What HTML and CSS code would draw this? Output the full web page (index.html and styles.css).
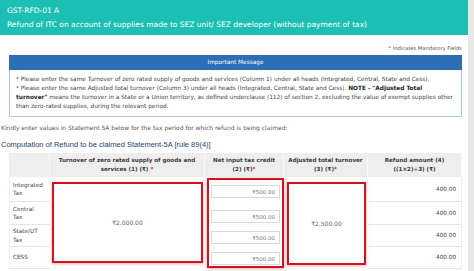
FILE: index.html
```html
<html>
  <head>
    <link rel="stylesheet" href="styles.css">
  </head>
  <body>
    <div class="page">
      <div class="main">
        <div class="header">
          <div class="form-code">GST-RFD-01 A</div>
          <div class="form-title">Refund of ITC on account of supplies made to SEZ unit/ SEZ developer (without payment of tax)</div>
        </div>

        <div class="content">
          <div class="mandatory"><span class="star">*</span> Indicates Mandatory Fields</div>

          <div class="message">
            <div class="message-title">Important Message</div>
            <div class="message-body">
              <div>* Please enter the same Turnover of zero rated supply of goods and services (Column 1) under all heads (Integrated, Central, State and Cess).</div>
              <div>* Please enter the same Adjusted total turnover (Column 3) under all heads (Integrated, Central, State and Cess). <b>NOTE - "Adjusted Total<br>turnover"</b> means the turnover in a State or a Union territory, as defined underclause (112) of section 2, excluding the value of exempt supplies other<br>than zero-rated supplies, during the relevant period.</div>
            </div>
          </div>

          <div class="hint">Kindly enter values in Statement 5A below for the tax period for which refund is being claimed:</div>
          <div class="section-title">Computation of Refund to be claimed Statement-5A [rule 89(4)]</div>

          <div class="refund-table">
            <div class="th"></div>
            <div class="th"><span>Turnover of zero rated supply of goods and<br>services (1) (₹) <span class="star">*</span></span></div>
            <div class="th"><span>Net input tax credit<br>(2) (₹)<span class="star">*</span></span></div>
            <div class="th"><span>Adjusted total turnover<br>(3) (₹)<span class="star">*</span></span></div>
            <div class="th"><span>Refund amount (4)<br>((1×2)÷3) (₹)</span></div>

            <div class="label row-1">Integrated Tax</div>
            <div class="label row-2">Central Tax</div>
            <div class="label row-3">State/UT Tax</div>
            <div class="label row-4">CESS</div>

            <div class="turnover-cell">
              <div class="highlight">₹2,000.00</div>
            </div>

            <div class="credit-cell">
              <div class="highlight credit-list">
                <input class="amount-input" value="₹500.00" readonly>
                <input class="amount-input" value="₹500.00" readonly>
                <input class="amount-input" value="₹500.00" readonly>
                <input class="amount-input" value="₹500.00" readonly>
              </div>
            </div>

            <div class="adjusted-cell">
              <div class="highlight">₹2,500.00</div>
            </div>

            <div class="refund row-1">400.00</div>
            <div class="refund row-2">400.00</div>
            <div class="refund row-3">400.00</div>
            <div class="refund row-4">400.00</div>
          </div>
        </div>
      </div>
      <div class="scroll-strip"></div>
    </div>
  </body>
</html>
```

FILE: styles.css
```css
body {
  margin: 0;
  font-family: "DejaVu Sans", Verdana, sans-serif;
  color: #444444;
  background: #FFFFFF;
}

.page {
  display: flex;
  width: 474px;
  height: 271px;
  overflow: hidden;
}

.main {
  width: 468px;
}

.scroll-strip {
  width: 6px;
  background-color: #E8E8E8;
}

.header {
  height: 35px;
  box-sizing: border-box;
  padding: 4px 7px 0;
  background-color: #1CBFB3;
  color: #FFFFFF;
  font-size: 7.5px;
  line-height: 14px;
}

.content {
  padding: 0 6px 0 1px;
}

.star {
  color: #E0141E;
}

.mandatory,
.message,
.refund-table {
  margin-left: 8px;
}

.mandatory {
  height: 20px;
  box-sizing: border-box;
  padding-top: 9px;
  text-align: right;
  font-size: 5.2px;
  line-height: 8px;
  color: #555555;
}

.message-title {
  height: 15px;
  line-height: 15px;
  text-align: center;
  background-color: #2D6EB5;
  color: #FFFFFF;
  font-size: 5.8px;
}

.message-body {
  border: 1px solid #A8C8EA;
  border-top: none;
  padding: 5px 6px 5px;
  font-size: 5.8px;
  line-height: 9px;
  color: #444444;
  white-space: nowrap;
}

.message-body b {
  color: #222222;
}

.hint {
  margin-top: 5.5px;
  font-size: 6px;
  line-height: 9px;
  color: #555555;
}

.section-title {
  margin-top: 7.5px;
  margin-bottom: 2px;
  font-family: "Liberation Sans", Arial, sans-serif;
  font-size: 7.5px;
  line-height: 12px;
  color: #1D3F6E;
}

.refund-table {
  display: grid;
  grid-template-columns: 41px 155px 79px 84px 94px;
  grid-template-rows: 24px 25px 23px 22px 22px;
  font-size: 5.7px;
}

.th {
  display: flex;
  align-items: center;
  justify-content: center;
  padding: 0 1px;
  text-align: center;
  background-color: #EEEEEE;
  border-right: 1px solid #F8F8F8;
  font-size: 5.6px;
  font-weight: bold;
  color: #3A3A3A;
  line-height: 9px;
  white-space: nowrap;
}

.label,
.refund {
  display: flex;
  align-items: center;
  border-bottom: 1px solid #E4E4E4;
  line-height: 8.5px;
}

.label {
  grid-column: 1;
  padding: 0 8px 0 3px;
  border-left: 1px solid #EEEEEE;
}

.refund {
  grid-column: 5;
  justify-content: flex-end;
  padding-right: 5px;
  border-right: 1px solid #EEEEEE;
}

.row-1 { grid-row: 2; }
.row-2 { grid-row: 3; }
.row-3 { grid-row: 4; }
.row-4 { grid-row: 5; }

.turnover-cell,
.credit-cell,
.adjusted-cell {
  grid-row: 2 / span 4;
  display: flex;
}

.turnover-cell {
  grid-column: 2;
  padding: 5px 2px 6px 2px;
}

.credit-cell {
  grid-column: 3;
  padding: 1px 0 1px 2px;
}

.adjusted-cell {
  grid-column: 4;
  padding: 5px 2px 4px 3px;
}

.highlight {
  flex: 1;
  display: flex;
  align-items: center;
  justify-content: center;
  border: 2px solid #D0141C;
  box-shadow: 0 1px 3px rgba(212, 21, 29, 0.35);
  color: #666666;
  font-size: 6px;
}

.credit-list {
  flex-direction: column;
  justify-content: flex-start;
  padding: 5px 2px 0;
}

.amount-input {
  width: 100%;
  height: 13px;
  box-sizing: border-box;
  padding: 0 4px 0 0;
  border: 1px solid #D9D9D9;
  background: #FFFFFF;
  font-family: inherit;
  font-size: 5.5px;
  color: #777777;
  text-align: right;
  outline: none;
}

.amount-input + .amount-input {
  margin-top: 8px;
}

.amount-input:nth-child(2) {
  margin-top: 12px;
}
```
